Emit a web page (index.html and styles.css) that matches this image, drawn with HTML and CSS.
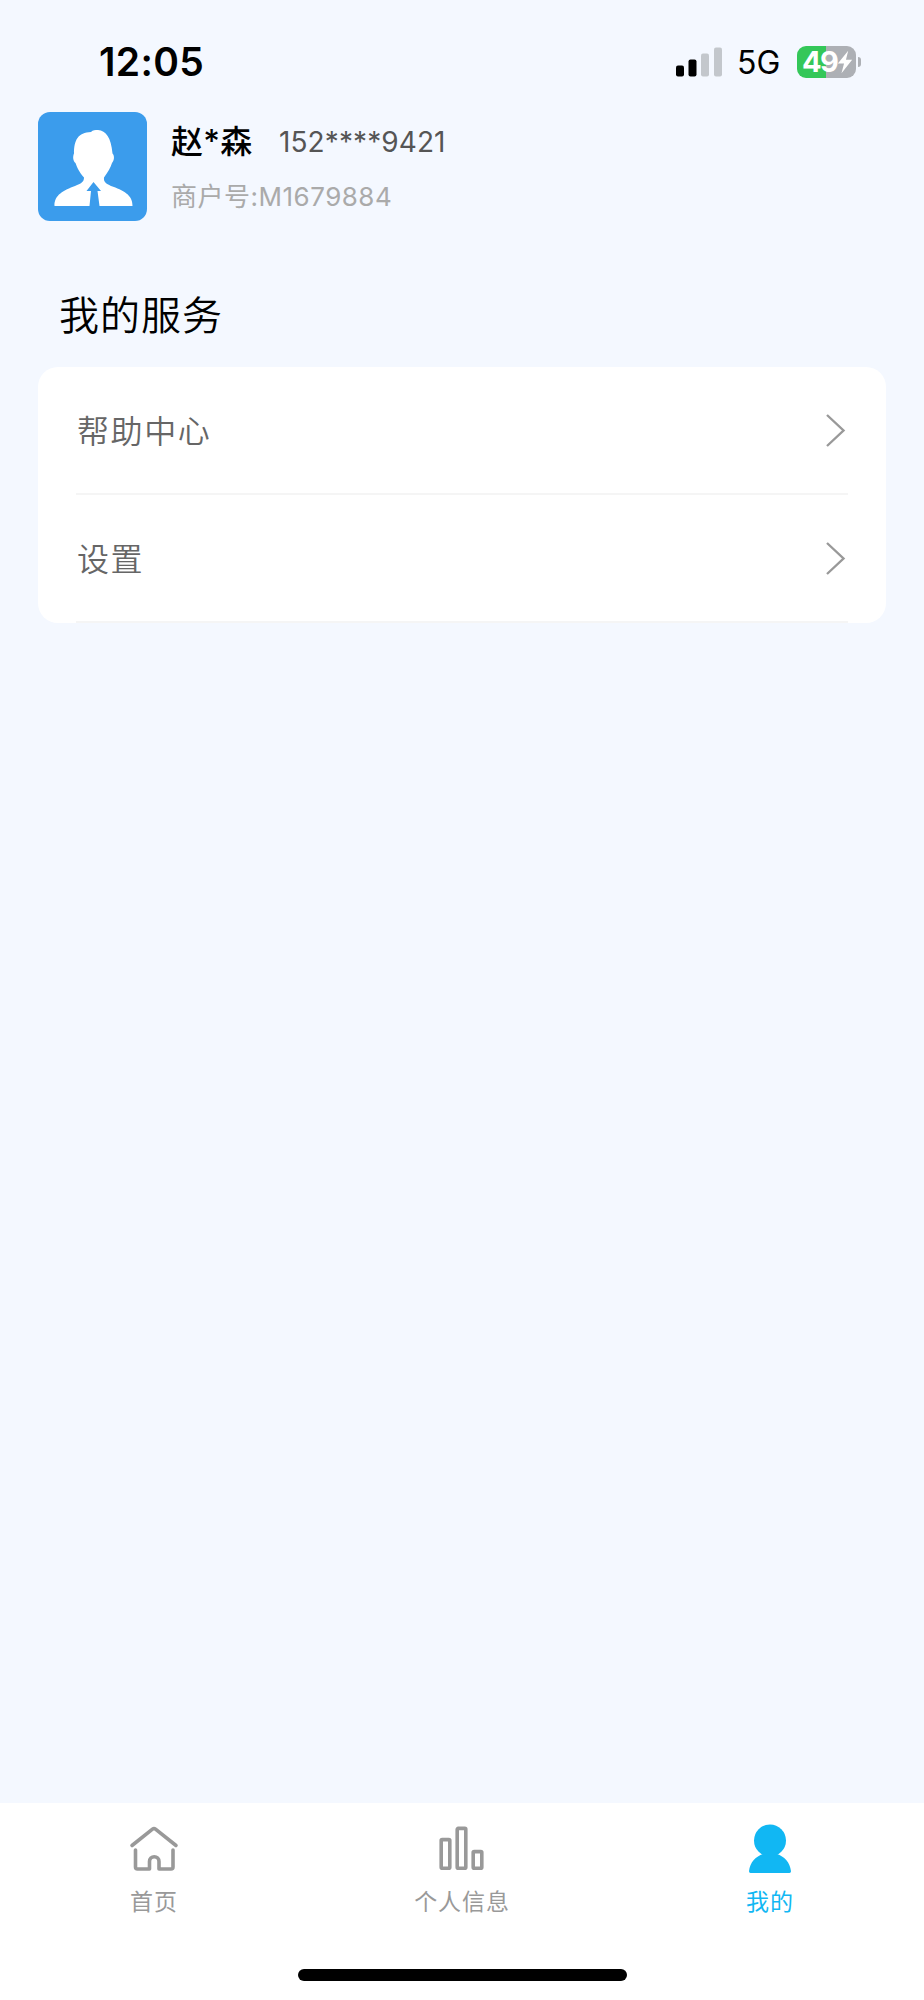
FILE: index.html
```html
<!DOCTYPE html>
<html lang="zh-CN">
<head>
  <meta charset="UTF-8" />
  <meta name="viewport" content="width=device-width, initial-scale=1.0" />
  <title>我的</title>
  <link rel="stylesheet" href="styles.css">
</head>
<body>

  <div class="status-bar">
    <div class="time">12:05</div>
    <div class="status-right">
      <svg class="signal" width="46" height="30" viewBox="0 0 46 30">
        <rect x="0" y="18.5" width="8" height="11" rx="2" fill="#000"/>
        <rect x="12.5" y="12.5" width="8" height="17" rx="2" fill="#000"/>
        <rect x="25" y="6.5" width="8" height="23" rx="2" fill="#c3c7cc"/>
        <rect x="38" y="0.5" width="8" height="29" rx="2" fill="#c3c7cc"/>
      </svg>
      <span class="network">5G</span>
      <div class="battery">
        <div class="battery-body">
          <span>49</span>
          <svg width="16" height="24" viewBox="0 0 15 22"><path d="M10.5 0.5 L0.8 12.3 H6.6 L4.2 21.5 L14.2 9 H8.4 Z" fill="#fff"/></svg>
        </div>
        <div class="battery-cap"></div>
      </div>
    </div>
  </div>

  <div class="profile">
    <div class="avatar">
      <svg width="109" height="109" viewBox="0 0 109 109">
        <path fill="#fff" d="M16.500 94 C16 83 26 78 37 74 C43 71.500 46 70 46 65.500 C41 60 39 55 37.500 51 C35 49 34.500 45 36 41.500 C36 28 40 20.500 53 20 C55 18 57 18 60 18 C68 19 73 25 74.500 41.500 C77 44 76 49 74 51 C72.500 56 70 60 66 65.500 C65.500 70 68 71.500 73 74 C85 78 95 83 94.500 94 H61.500 L59.500 79 H63 L55.500 70 L48.500 79 H53 L51.500 94 Z"/>
      </svg>
    </div>
    <div class="profile-info">
      <div class="profile-top">
        <span class="name">赵*森</span>
        <span class="phone">152****9421</span>
      </div>
      <div class="merchant">商户号:M1679884</div>
    </div>
  </div>

  <h2 class="section-title">我的服务</h2>

  <div class="menu">
    <div class="menu-item">
      <span>帮助中心</span>
      <svg width="20" height="34" viewBox="0 0 20 34"><path d="M1 2 L17.500 17.500 L1 33" fill="none" stroke="#999" stroke-width="2.4"/></svg>
    </div>
    <div class="menu-item">
      <span>设置</span>
      <svg width="20" height="34" viewBox="0 0 20 34"><path d="M1 2 L17.500 17.500 L1 33" fill="none" stroke="#999" stroke-width="2.4"/></svg>
    </div>
  </div>

  <div class="tab-bar">
    <div class="tabs">
      <div class="tab">
        <svg width="54" height="54" viewBox="0 0 54 54" fill="none" stroke="#999" stroke-width="3.6" stroke-linecap="round" stroke-linejoin="round">
          <path d="M5 22.500 L25.500 6.200 Q27 5 28.500 6.200 L49 22.500"/>
          <path d="M8.500 27 V44 Q8.500 46 10.500 46 H22.500 V38.500 A4.750 4.750 0 0 1 32 38.500 V46 H44 Q46 46 46 44 V27"/>
        </svg>
        <span>首页</span>
      </div>
      <div class="tab">
        <svg width="54" height="54" viewBox="0 0 54 54" fill="none" stroke="#999" stroke-width="3.6">
          <rect x="6.200" y="16.600" width="8.600" height="28.600" rx="1"/>
          <rect x="22.200" y="5.400" width="8.600" height="39.800" rx="1"/>
          <rect x="38.200" y="28.600" width="8.600" height="16.600" rx="1"/>
        </svg>
        <span>个人信息</span>
      </div>
      <div class="tab active">
        <svg width="54" height="54" viewBox="0 0 54 54" fill="#11b7f3">
          <circle cx="27" cy="17.500" r="16"/>
          <path d="M6 48.200 C7 39 13 33.500 20 31 L18 28 H36 L34 31 C41 33.500 47 39 48 48.200 Q48 50 46.500 50 H7.500 Q6 50 6 48.200 Z"/>
        </svg>
        <span>我的</span>
      </div>
    </div>
    <div class="home-indicator"></div>
  </div>

</body>
</html>
```
FILE: styles.css
```css
* {
  box-sizing: border-box;
}
body {
  margin: 0;
  height: 2000px;
  display: flex;
  flex-direction: column;
  background: #f4f8ff;
  font-family: Inter, 'Noto Sans CJK SC', sans-serif;
  color: #000;
  overflow: hidden;
}
svg {
  display: block;
  flex-shrink: 0;
}

/* status bar */
.status-bar {
  height: 112px;
  padding: 12px 63px 0 99px;
  display: flex;
  align-items: center;
  justify-content: space-between;
}
.time {
  font-size: 39px;
  font-weight: 600;
  line-height: 48px;
  letter-spacing: 0.3px;
}
.status-right {
  display: flex;
  align-items: center;
  line-height: 36px;
}
.network {
  width: 60px;
  margin-left: 15px;
  padding-top: 2px;
  font-size: 32px;
}
.battery {
  display: flex;
  align-items: center;
}
.battery-body {
  width: 59px;
  height: 32px;
  padding-left: 5px;
  display: flex;
  align-items: center;
  border-radius: 9px;
  background: linear-gradient(to right, #34c759 49%, #adb0b5 49%);
  color: #fff;
  font-size: 29px;
  font-weight: 700;
  letter-spacing: -1.6px;
}
.battery-cap {
  width: 3px;
  height: 10px;
  margin-left: 2px;
  border-radius: 0 4px 4px 0;
  background: #adb0b5;
}

/* profile */
.profile {
  display: flex;
  height: 109px;
  padding: 0 38px;
}
.avatar {
  width: 109px;
  height: 109px;
  border-radius: 12px;
  background: #3b9cec;
  overflow: hidden;
}
.profile-info {
  margin-left: 24px;
}
.profile-top {
  display: flex;
  align-items: center;
  height: 58px;
}
.name {
  width: 108px;
  padding-bottom: 5px;
  font-size: 32px;
  font-weight: 500;
  letter-spacing: 0.3px;
}
.phone {
  padding-top: 1px;
  color: #555;
  font-size: 28px;
  letter-spacing: 0.1px;
}
.merchant {
  color: #aaa;
  font-size: 26px;
  line-height: 54px;
  letter-spacing: 0.5px;
}

/* services */
.section-title {
  margin: 65px 0 21px 59px;
  font-size: 40px;
  font-weight: 350;
  line-height: 60px;
  letter-spacing: 1px;
}
.menu {
  margin: 0 38px;
  padding: 0 38px;
  background: #fff;
  border-radius: 20px;
}
.menu-item {
  height: 128px;
  display: flex;
  align-items: center;
  justify-content: space-between;
  padding-right: 2px;
  border-bottom: 2px solid #f5f5f5;
  color: #666;
  font-size: 32px;
  font-weight: 350;
  letter-spacing: 1.6px;
}
.menu-item span {
  padding: 0 0 2px 1px;
}

/* bottom tabs */
.tab-bar {
  height: 197px;
  margin-top: auto;
  background: #fff;
}
.tabs {
  display: flex;
  height: 166px;
  padding-top: 20px;
}
.tab {
  flex: 1;
  display: flex;
  flex-direction: column;
  align-items: center;
  color: #999;
  font-size: 23px;
  line-height: 34px;
  letter-spacing: 0.9px;
}
.tab span {
  margin-top: 8px;
}
.tab.active {
  color: #11b7f3;
}
.home-indicator {
  width: 329px;
  height: 12px;
  margin: 0 auto;
  border-radius: 6px;
  background: #000;
}
```
